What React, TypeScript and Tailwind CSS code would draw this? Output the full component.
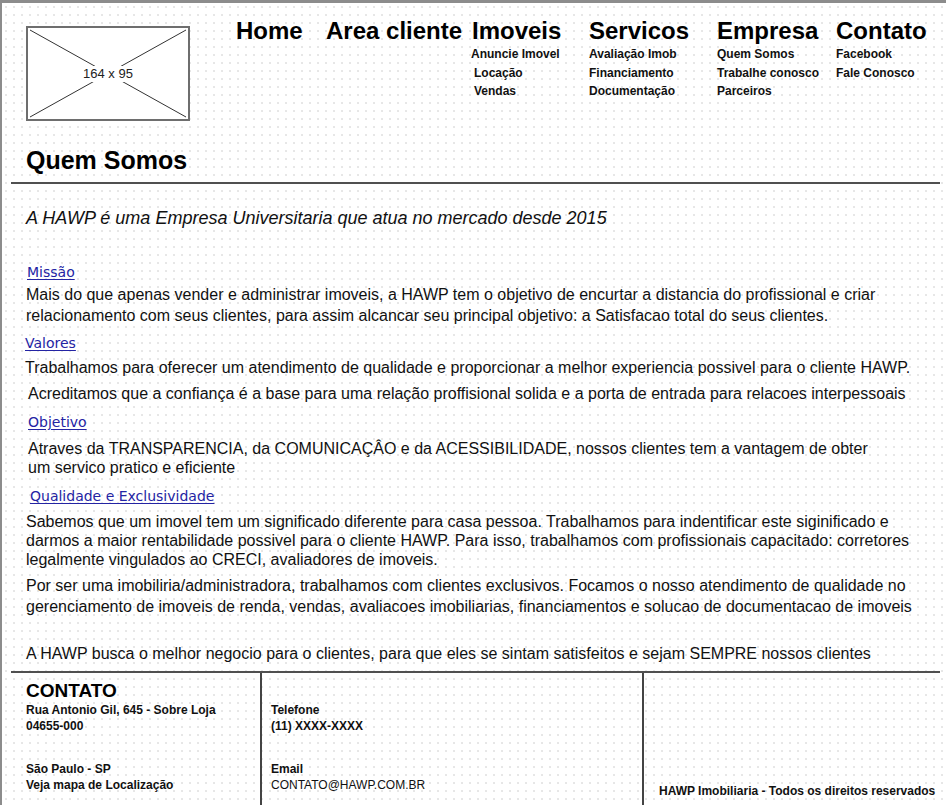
const navMenu = [
  { title: "Home", width: "w-[90px]", items: [] as { label: string; indent?: string }[] },
  { title: "Area cliente", width: "w-[146px]", items: [] },
  {
    title: "Imoveis",
    width: "w-[117px]",
    items: [
      { label: "Anuncie Imovel", indent: "-ml-px" },
      { label: "Locação", indent: "ml-[2px]" },
      { label: "Vendas", indent: "ml-[2px]" },
    ],
  },
  {
    title: "Servicos",
    width: "w-[128px]",
    items: [{ label: "Avaliação Imob" }, { label: "Financiamento" }, { label: "Documentação" }],
  },
  {
    title: "Empresa",
    width: "w-[119px]",
    items: [{ label: "Quem Somos" }, { label: "Trabalhe conosco" }, { label: "Parceiros" }],
  },
  {
    title: "Contato",
    width: "w-[100px]",
    items: [{ label: "Facebook" }, { label: "Fale Conosco" }],
  },
];

// Link titles drawn in a hand-written style in the mockup
const SectionLink = ({ children, className }: { children: string; className?: string }) => (
  <a
    href="#"
    className={`block w-fit font-['Comic_Sans_MS','DejaVu_Sans',sans-serif] text-[14px] leading-[18px] text-[#2424a4] underline underline-offset-2 ${className ?? ""}`}
  >
    {children}
  </a>
);

const LogoPlaceholder = () => (
  <div className="relative h-[95px] w-[164px] border-2 border-[#6e6e6e] bg-white">
    <svg className="absolute inset-0 h-full w-full" viewBox="0 0 160 91" preserveAspectRatio="none">
      <line x1="2" y1="2" x2="158" y2="89" stroke="#333" strokeWidth="1" />
      <line x1="158" y1="2" x2="2" y2="89" stroke="#333" strokeWidth="1" />
    </svg>
    <span className="absolute left-1/2 top-1/2 -translate-x-1/2 -translate-y-1/2 bg-white px-[3px] text-[13px] leading-[16px] text-[#222]">
      164 x 95
    </span>
  </div>
);

export default function App() {
  return (
    <div className="h-[805px] w-[946px] overflow-hidden border-l-2 border-t-[3px] border-[#8c8c8c] bg-white bg-[radial-gradient(circle,#e6e6e6_0.7px,transparent_1.1px)] bg-[length:8px_8px] font-['Liberation_Sans',Arial,sans-serif] text-[#111]">
      {/* Header - logo and navigation */}
      <header className="flex h-[142px] pl-[24px]">
        <div className="pt-[23px]">
          <LogoPlaceholder />
        </div>
        <nav className="ml-[46px] flex pt-[14px]">
          {navMenu.map((menu) => (
            <div key={menu.title} className={menu.width}>
              <div className="text-[24px] font-bold leading-[28px] text-black">{menu.title}</div>
              <ul className="text-[12px] font-bold leading-[18.5px]">
                {menu.items.map((item) => (
                  <li key={item.label} className={item.indent ?? ""}>
                    {item.label}
                  </li>
                ))}
              </ul>
            </div>
          ))}
        </nav>
      </header>

      {/* Page title */}
      <h1 className="pl-[24px] text-[25px] font-bold leading-[30px] text-black">Quem Somos</h1>
      <hr className="ml-[9px] mt-[7px] w-[929px] border-0 border-t-2 border-[#505050]" />

      {/* Content */}
      <main className="pl-[24px] text-[16px]">
        <p className="mt-[22px] text-[18px] italic leading-[24px]">
          A HAWP é uma Empresa Universitaria que atua no mercado desde 2015
        </p>

        <SectionLink className="ml-px mt-[33px]">Missão</SectionLink>
        <p className="mt-[3px] leading-[21px]">
          Mais do que apenas vender e administrar imoveis, a HAWP tem o objetivo de encurtar a distancia do profissional e criar
          <br />
          relacionamento com seus clientes, para assim alcancar seu principal objetivo: a Satisfacao total do seus clientes.
        </p>

        <SectionLink className="-ml-px mt-[8px]">Valores</SectionLink>
        <p className="-ml-px mt-[5px] leading-[21px]">
          Trabalhamos para oferecer um atendimento de qualidade e proporcionar a melhor experiencia possivel para o cliente HAWP.
        </p>
        <p className="ml-[2px] mt-[5px] leading-[21px]">
          Acreditamos que a confiança é a base para uma relação proffisional solida e a porta de entrada para relacoes interpessoais
        </p>

        <SectionLink className="ml-[2px] mt-[9px]">Objetivo</SectionLink>
        <p className="ml-[2px] mt-[8px] leading-[19px]">
          Atraves da TRANSPARENCIA, da COMUNICAÇÂO e da ACESSIBILIDADE, nossos clientes tem a vantagem de obter
          <br />
          um servico pratico e eficiente
        </p>

        <SectionLink className="ml-[4px] mt-[10px]">Qualidade e Exclusividade</SectionLink>
        <p className="mt-[7px] leading-[19px]">
          Sabemos que um imovel tem um significado diferente para casa pessoa. Trabalhamos para indentificar este siginificado e
          <br />
          darmos a maior rentabilidade possivel para o cliente HAWP. Para isso, trabalhamos com profissionais capacitado: corretores
          <br />
          legalmente vingulados ao CRECI, avaliadores de imoveis.
        </p>
        <p className="mt-[6px] leading-[21px]">
          Por ser uma imobiliria/administradora, trabalhamos com clientes exclusivos. Focamos o nosso atendimento de qualidade no
          <br />
          gerenciamento de imoveis de renda, vendas, avaliacoes imobiliarias, financiamentos e solucao de documentacao de imoveis
        </p>
        <p className="mt-[26px] leading-[21px]">
          A HAWP busca o melhor negocio para o clientes, para que eles se sintam satisfeitos e sejam SEMPRE nossos clientes
        </p>
      </main>

      {/* Footer */}
      <footer className="ml-[9px] mt-[7px] flex h-[140px] w-[929px] border-t-2 border-[#505050] text-[12px] font-bold leading-[16px]">
        <div className="w-[251px] border-r-2 border-[#444] pl-[15px]">
          <h2 className="mt-[7px] text-[19px] font-bold leading-[22px] text-black">CONTATO</h2>
          <p>Rua Antonio Gil, 645 - Sobre Loja</p>
          <p>04655-000</p>
          <p className="mt-[27px]">São Paulo - SP</p>
          <p>Veja mapa de Localização</p>
        </div>
        <div className="w-[382px] border-r-2 border-[#444] pl-[9px]">
          <p className="mt-[29px]">Telefone</p>
          <p>(11) XXXX-XXXX</p>
          <p className="mt-[27px]">Email</p>
          <p className="font-normal">CONTATO@HAWP.COM.BR</p>
        </div>
        <div className="flex-1 pl-[15px]">
          <p className="mt-[110px]">HAWP Imobiliaria - Todos os direitos reservados</p>
        </div>
      </footer>
    </div>
  );
}
